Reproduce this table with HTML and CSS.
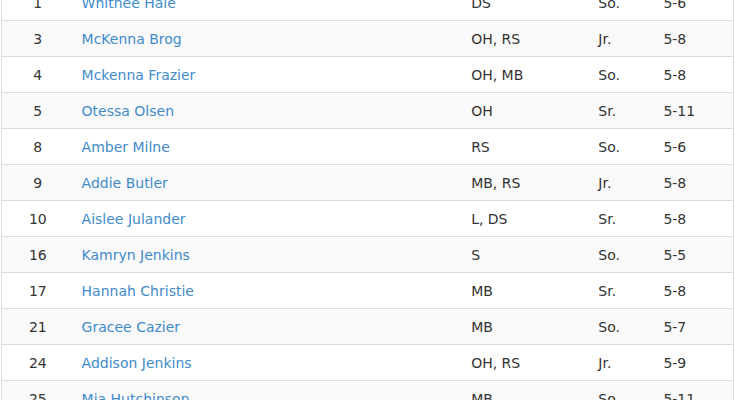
FILE: index.html
```html
<!DOCTYPE html>
<html>
<head>
<meta charset="utf-8">
<link rel="stylesheet" href="styles.css">
</head>
<body>
<div class="wrap">
<table class="roster">
<colgroup>
<col class="c-num"><col class="c-name"><col class="c-pos"><col class="c-cls"><col class="c-ht">
</colgroup>
<tbody>
<tr><td class="num">1</td><td><a href="#">Whitnee Hale</a></td><td>DS</td><td>So.</td><td>5-6</td></tr>
<tr><td class="num">3</td><td><a href="#">McKenna Brog</a></td><td>OH, RS</td><td>Jr.</td><td>5-8</td></tr>
<tr><td class="num">4</td><td><a href="#">Mckenna Frazier</a></td><td>OH, MB</td><td>So.</td><td>5-8</td></tr>
<tr><td class="num">5</td><td><a href="#">Otessa Olsen</a></td><td>OH</td><td>Sr.</td><td>5-11</td></tr>
<tr><td class="num">8</td><td><a href="#">Amber Milne</a></td><td>RS</td><td>So.</td><td>5-6</td></tr>
<tr><td class="num">9</td><td><a href="#">Addie Butler</a></td><td>MB, RS</td><td>Jr.</td><td>5-8</td></tr>
<tr><td class="num">10</td><td><a href="#">Aislee Julander</a></td><td>L, DS</td><td>Sr.</td><td>5-8</td></tr>
<tr><td class="num">16</td><td><a href="#">Kamryn Jenkins</a></td><td>S</td><td>So.</td><td>5-5</td></tr>
<tr><td class="num">17</td><td><a href="#">Hannah Christie</a></td><td>MB</td><td>Sr.</td><td>5-8</td></tr>
<tr><td class="num">21</td><td><a href="#">Gracee Cazier</a></td><td>MB</td><td>So.</td><td>5-7</td></tr>
<tr><td class="num">24</td><td><a href="#">Addison Jenkins</a></td><td>OH, RS</td><td>Jr.</td><td>5-9</td></tr>
<tr><td class="num">25</td><td><a href="#">Mia Hutchinson</a></td><td>MB</td><td>So.</td><td>5-11</td></tr>
</tbody>
</table>
</div>
</body>
</html>
```
FILE: styles.css
```css
html, body {
  margin: 0;
  padding: 0;
  background: #fff;
}
.wrap {
  padding-left: 1px;
  height: 400px;
  overflow: hidden;
}
.roster {
  width: 733px;
  margin-top: -16px;
  border-collapse: collapse;
  table-layout: fixed;
  border-left: 1px solid #ddd;
  border-right: 1px solid #ddd;
  font-family: "DejaVu Sans", Verdana, sans-serif;
  font-size: 14px;
  color: #333;
}
.c-num { width: 72px; }
.c-name { width: 389px; }
.c-pos { width: 127px; }
.c-cls { width: 65px; }
.c-ht { width: 78px; }
.roster td {
  height: 35px;
  padding: 0 8px;
  border-top: 1px solid #ddd;
  vertical-align: middle;
  white-space: nowrap;
}
.roster tr:nth-child(even) td {
  background: #f9f9f9;
}
.roster td.num {
  text-align: center;
}
.roster a {
  color: #428bca;
  text-decoration: none;
}
```
